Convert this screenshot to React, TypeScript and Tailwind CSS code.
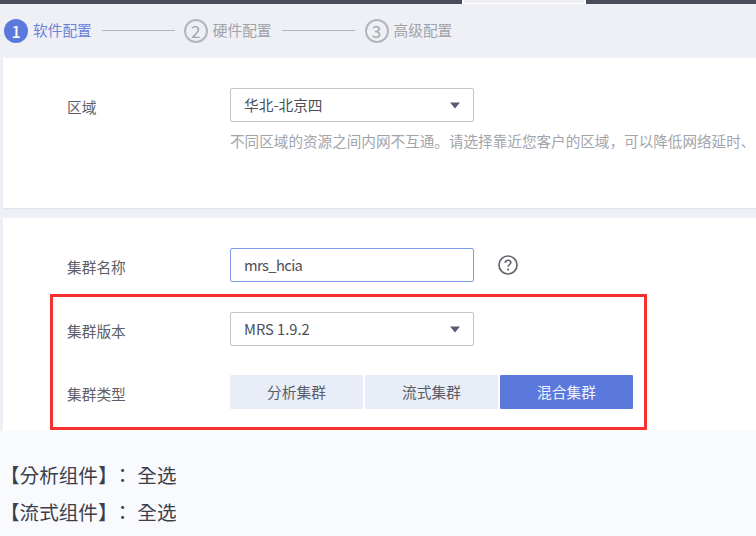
import React from "react";

const font = { fontFamily: '"Noto Sans CJK SC", "Noto Sans", sans-serif' };

function Caret() {
  return (
    <svg width="10" height="7" viewBox="0 0 10 7" className="shrink-0">
      <path d="M0 0.5h10L5 6.5z" fill="#575d6c" />
    </svg>
  );
}

function Step({ n, label, active }: { n: number; label: string; active?: boolean }) {
  return (
    <div className="flex items-center">
      <div
        className={
          active
            ? "flex h-[24px] w-[24px] items-center justify-center rounded-full bg-[#5b79dd] text-[16px] font-medium leading-none text-white"
            : "flex h-[24px] w-[24px] items-center justify-center rounded-full border-2 border-[#b4b6bd] text-[17px] leading-none text-[#a3a5ac]"
        }
      >
        {n}
      </div>
      <span className={active ? "ml-[5px] text-[14.7px] leading-none text-[#6a82d8]" : "ml-[5px] text-[14.7px] leading-none text-[#a0a2a9]"}>
        {label}
      </span>
    </div>
  );
}

function Line({ className }: { className: string }) {
  return <div className={"h-[1px] w-[73px] bg-[#b2b4ba] " + className} />;
}

function Label({ children }: { children: React.ReactNode }) {
  return <div className="w-[227px] pl-[64px] pt-[9px] text-[14.7px] leading-[20px] text-[#5e6068]">{children}</div>;
}

function Select({ value }: { value: string }) {
  return (
    <div className="flex h-[34px] w-[244px] items-center justify-between rounded-[2px] border border-[#c3c5cb] bg-white pl-[13px] pr-[13px] text-[14.7px] text-[#4c4e58]">
      <span>{value}</span>
      <Caret />
    </div>
  );
}

function Seg({ label, active }: { label: string; active?: boolean }) {
  return (
    <div
      className={
        (active ? "bg-[#5b79dd] text-[#eef1fb] " : "bg-[#e9edf8] text-[#5a5c66] ") +
        "flex h-[34px] w-[133px] items-center justify-center rounded-[1px] text-[14.7px]"
      }
    >
      {label}
    </div>
  );
}

function Note({ label }: { label: string }) {
  return (
    <div className="whitespace-nowrap">
      【{label}
      <span className="mr-[5px] [font-feature-settings:'halt']">】</span>
      <span className="mr-[5px]">：</span>全选
    </div>
  );
}

export default function App() {
  return (
    <div className="relative h-[536px] w-[756px] overflow-hidden bg-[#eef0f5]" style={font}>
      <div className="flex h-[4px]">
        <div className="w-[462px] bg-[#4a4e5c]" />
        <div className="w-[124px] border-x-2 border-b border-white bg-[#eef0f5]" />
        <div className="flex-1 bg-[#4a4e5c]" />
      </div>

      <div className="flex h-[54px] items-center pb-[1px] pl-[4px]">
        <Step n={1} label="软件配置" active />
        <Line className="ml-[10px] mr-[9px]" />
        <Step n={2} label="硬件配置" />
        <Line className="ml-[10px] mr-[10px]" />
        <Step n={3} label="高级配置" />
      </div>

      <div className="ml-[3px] h-[150px] bg-white pt-[30px] shadow-[0_1px_1px_#e2e4ea]">
        <div className="flex">
          <Label>区域</Label>
          <Select value="华北-北京四" />
        </div>
        <div className="ml-[227px] mt-[9px] whitespace-nowrap text-[14.6px] leading-[20px] text-[#a2a4aa]">
          不同区域的资源之间内网不互通。请选择靠近您客户的区域，可以降低网络延时、
        </div>
      </div>

      <div className="ml-[3px] mt-[10px] h-[213px] bg-white pt-[30px]">
        <div className="flex items-start">
          <Label>集群名称</Label>
          <div className="flex h-[34px] w-[244px] items-center rounded-[2px] border border-[#7f9ae8] pl-[13px] text-[14.7px] tracking-[-0.6px] text-[#4c4e58]">
            mrs_hcia
          </div>
          <svg width="20" height="20" viewBox="0 0 20 20" className="ml-[24px] mt-[7px]">
            <circle cx="10" cy="10" r="9" fill="none" stroke="#62646c" strokeWidth="1.7" />
            <path d="M7.3 7.9c0-1.6 1.2-2.6 2.8-2.6s2.7 1 2.7 2.3c0 2-2.7 2-2.7 4.2" fill="none" stroke="#62646c" strokeWidth="1.6" />
            <circle cx="10.1" cy="14.6" r="1.1" fill="#62646c" />
          </svg>
        </div>
        <div className="mt-[30px] flex items-start">
          <Label>集群版本</Label>
          <Select value="MRS 1.9.2" />
        </div>
        <div className="mt-[29px] flex items-start">
          <Label>集群类型</Label>
          <div className="flex gap-[2px]">
            <Seg label="分析集群" />
            <Seg label="流式集群" />
            <Seg label="混合集群" active />
          </div>
        </div>
      </div>

      <div className="h-[105px] bg-[#f8fafd] pt-[25px] text-[19.6px] leading-[37px] text-[#3c3f4a] [font-family:'Noto_Sans_CJK_TC','Noto_Sans_CJK_SC',sans-serif] [text-spacing-trim:space-all]">
        <Note label="分析组件" />
        <Note label="流式组件" />
      </div>

      <div className="absolute left-[50px] top-[294px] h-[136px] w-[597px] border-[3px] border-[#f5302f]" />
    </div>
  );
}
